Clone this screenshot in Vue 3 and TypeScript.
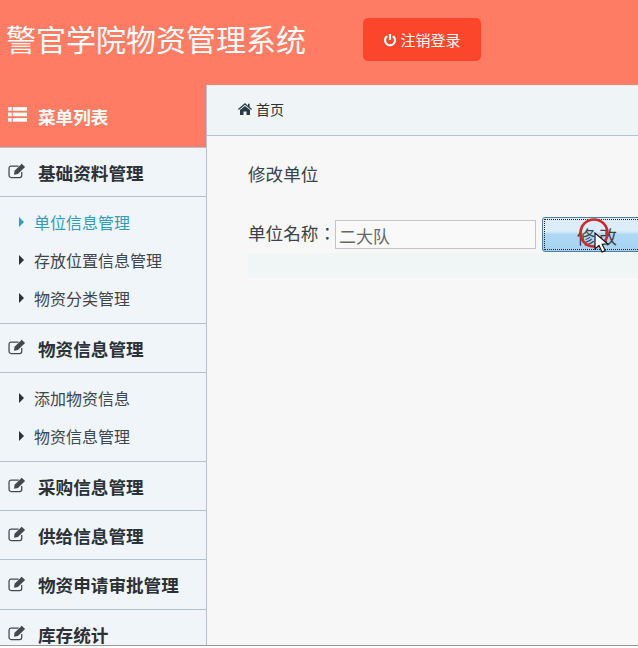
<template>
  <div class="page">
    <header class="topbar">
      <h1 class="brand">警官学院物资管理系统</h1>
      <button class="logout">
        <svg class="power" viewBox="0 0 14 14"><path d="M4.2 3.2a5 5 0 1 0 5.6 0" fill="none" stroke="currentColor" stroke-width="2.2" /><path d="M7 1v6" stroke="currentColor" stroke-width="2.2" /></svg>
        注销登录
      </button>
    </header>

    <div class="body">
      <aside class="sidebar">
        <div class="menu-title">
          <svg class="list-icon" viewBox="0 0 18 14" fill="currentColor">
            <rect x="0" y="0" width="3.5" height="3.4" />
            <rect x="4.5" y="0" width="13.5" height="3.4" />
            <rect x="0" y="5.2" width="3.5" height="3.4" />
            <rect x="4.5" y="5.2" width="13.5" height="3.4" />
            <rect x="0" y="10.4" width="3.5" height="3.4" />
            <rect x="4.5" y="10.4" width="13.5" height="3.4" />
          </svg>
          <span>菜单列表</span>
        </div>

        <template v-for="group in menu" :key="group.name">
          <div class="group-head" :style="{ height: group.height + 'px' }">
            <svg class="edit-icon" viewBox="0 0 18 15">
              <path d="M13 8.5v3.2a2 2 0 0 1-2 2H3a2 2 0 0 1-2-2V4.8a2 2 0 0 1 2-2h7" fill="none" stroke="currentColor" stroke-width="1.2" />
              <path d="M6.2 7.2 13 .6l3.2 3-6.8 6.7-3.7.8z" fill="currentColor" />
            </svg>
            <span>{{ group.name }}</span>
          </div>
          <ul v-if="group.items.length" class="sub-list">
            <li v-for="item in group.items" :key="item" :class="{ active: item === current }">
              <i class="arrow" />{{ item }}
            </li>
          </ul>
        </template>
      </aside>

      <main class="content">
        <nav class="crumb">
          <svg class="home" viewBox="0 0 14 12" fill="currentColor">
            <path d="M7 0 0 6l.8.9L7 1.7l6.2 5.2.8-.9-2.4-2V.8H10v1.9z" />
            <path d="M7 2.9 2 7v5h3.5V8.6h3V12H12V7z" />
          </svg>
          首页
        </nav>
        <section class="panel">
          <h2 class="panel-title">修改单位</h2>
          <form class="edit-row" @submit.prevent>
            <label class="field-label" for="unit">单位名称：</label>
            <input id="unit" v-model="unitName" class="field-input" type="text" />
            <button class="submit">修 改</button>
          </form>
          <div class="form-strip" />
        </section>

        <svg class="pointer" viewBox="0 0 34 38">
          <circle cx="15" cy="15" r="13.5" fill="none" stroke="#cc2a2c" stroke-width="2.6" />
          <path d="M16 15v16l4-3.6 3 6.6 3.2-1.4-3-6.4 5.4-.4z" fill="#fff" stroke="#111" stroke-width="1.2" />
        </svg>
      </main>
    </div>
  </div>
</template>

<script setup lang="ts">
import { ref } from 'vue';

interface MenuGroup {
  name: string;
  height: number;
  items: string[];
}

const current = '单位信息管理';
const unitName = ref('二大队');

const menu: MenuGroup[] = [
  { name: '基础资料管理', height: 49, items: ['单位信息管理', '存放位置信息管理', '物资分类管理'] },
  { name: '物资信息管理', height: 49, items: ['添加物资信息', '物资信息管理'] },
  { name: '采购信息管理', height: 49, items: [] },
  { name: '供给信息管理', height: 49, items: [] },
  { name: '物资申请审批管理', height: 50, items: [] },
  { name: '库存统计', height: 49, items: [] },
];
</script>

<style>
html,
body {
  margin: 0;
  overflow: hidden;
  background: #fff;
}
</style>

<style scoped>
.page {
  height: 645px;
  overflow: hidden;
  display: flex;
  flex-direction: column;
  font-family: "Noto Sans CJK SC", "Liberation Sans", sans-serif;
  border-bottom: 1px solid #9a9a9a;
  box-sizing: content-box;
}

/* top bar */
.topbar {
  flex: 0 0 85px;
  display: flex;
  align-items: flex-start;
  background: #ff7c64;
}

.brand {
  margin: 16px 0 0 6px;
  width: 357px;
  font-size: 30px;
  line-height: 44px;
  font-weight: 400;
  color: #fff;
  white-space: nowrap;
}

.logout {
  margin-top: 18px;
  width: 118px;
  height: 43px;
  display: flex;
  align-items: center;
  justify-content: center;
  gap: 3px;
  border: none;
  border-radius: 5px;
  background: #fb462b;
  color: #fff;
  font-family: inherit;
  font-size: 15px;
}

.power {
  width: 14px;
  height: 14px;
}

/* sidebar */
.body {
  flex: 1;
  min-height: 0;
  display: flex;
}

.sidebar {
  flex: 0 0 206px;
  background: #eff5f8;
  border-right: 1px solid #b4c0cc;
}

.menu-title {
  height: 62px;
  padding-left: 8px;
  display: flex;
  align-items: center;
  gap: 11px;
  background: #ff7c64;
  border-bottom: 1px solid #b4c0cc;
  color: #fff;
  font-size: 17.6px;
  font-weight: 700;
  box-sizing: content-box;
}

.list-icon {
  width: 19px;
  height: 15px;
  margin-top: -3px;
}

.group-head {
  box-sizing: border-box;
  padding-left: 8px;
  display: flex;
  align-items: center;
  gap: 11px;
  border-bottom: 1px solid #b4c0cc;
  color: #2c3136;
  font-size: 17.6px;
  font-weight: 700;
}

.edit-icon {
  flex: none;
  width: 19px;
  height: 16px;
  color: #43484d;
  margin-top: -2px;
}

.sub-list {
  margin: 0;
  padding: 6px 0;
  list-style: none;
  border-bottom: 1px solid #b4c0cc;
}

.sub-list li {
  height: 38px;
  padding-left: 19px;
  display: flex;
  align-items: center;
  font-size: 16px;
  color: #40464b;
}

.sub-list li.active {
  color: #2f9dbd;
}

.arrow {
  width: 0;
  height: 0;
  margin-right: 10px;
  border-left: 5px solid #2c3136;
  border-top: 5px solid transparent;
  border-bottom: 5px solid transparent;
}

.active .arrow {
  border-left-color: #2f9dbd;
}

/* content */
.content {
  position: relative;
  flex: 1;
  min-width: 0;
  background: #f6f7f6;
  overflow: hidden;
}

.crumb {
  box-sizing: border-box;
  height: 51px;
  padding: 0 0 2px 31px;
  display: flex;
  align-items: center;
  gap: 4px;
  background: #eff5f6;
  border-bottom: 1px solid #b8c4d4;
  color: #2c3136;
  font-size: 14px;
}

.home {
  width: 14px;
  height: 12px;
  color: #2b3a46;
}

.panel {
  padding: 24px 0 0 41px;
}

.panel-title {
  margin: 0;
  font-size: 17.6px;
  line-height: 28px;
  font-weight: 400;
  color: #3d4247;
}

.edit-row {
  margin-top: 29px;
  display: flex;
  align-items: center;
  white-space: nowrap;
}

.field-label {
  width: 87px;
  flex: none;
  padding-bottom: 4px;
  font-family: "Noto Sans CJK TC", "Liberation Sans", sans-serif;
  font-size: 17.6px;
  color: #3d4247;
}

.field-input {
  box-sizing: border-box;
  flex: none;
  width: 201px;
  height: 29px;
  padding: 2px 3px 0;
  border: 1px solid #c4c4c4;
  background: #f8f9f8;
  outline: none;
  font-family: inherit;
  font-size: 17px;
  color: #666;
}

.submit {
  box-sizing: border-box;
  flex: none;
  width: 130px;
  height: 35px;
  margin-left: 6px;
  border: 1px solid #4a7fa5;
  border-radius: 3px;
  background: linear-gradient(#dcecf8 0 40%, #aed8f5 50%, #a6d3f2 100%);
  outline: 1px dotted #222;
  outline-offset: -3px;
  font-family: inherit;
  font-size: 18px;
  color: #3b3f44;
  text-align: left;
  padding: 2px 0 0 34px;
}

.form-strip {
  height: 24px;
  margin-top: 1px;
  background: #f0f5f5;
}

.pointer {
  position: absolute;
  left: 372px;
  top: 133px;
  width: 34px;
  height: 38px;
}
</style>
